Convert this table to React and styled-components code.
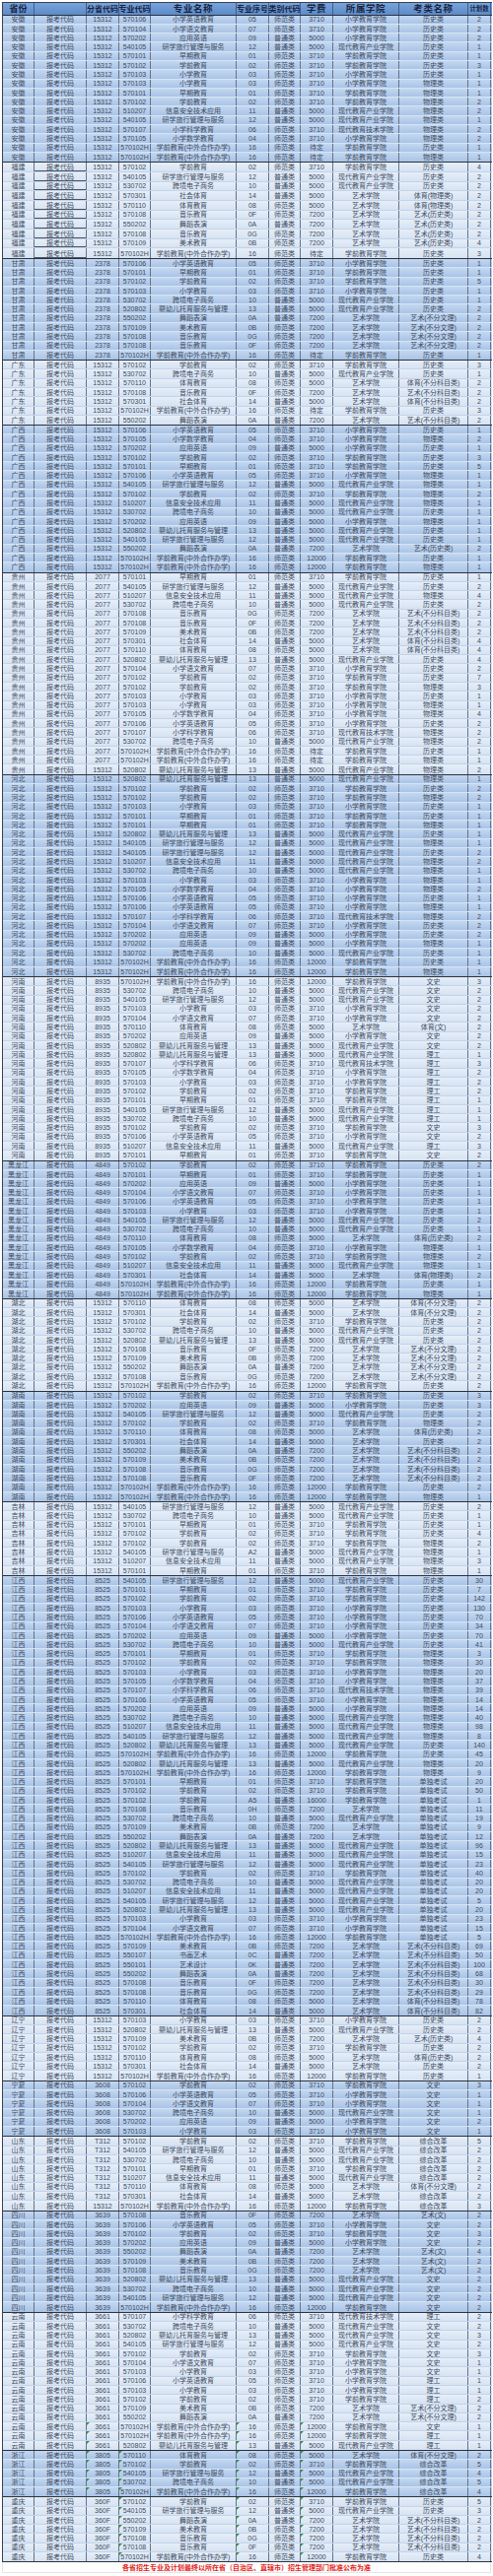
import React from 'react';
import styled, { createGlobalStyle, css } from 'styled-components';

const GlobalStyle = createGlobalStyle`
  html, body { margin: 0; padding: 0; background: #ffffff; }
  body { font-family: "Liberation Sans", "Noto Sans CJK SC", sans-serif; }
`;

const COLS = '32px 53px 33px 32px 87px 33px 32px 33px 67px 70px 23px';
const ROW_H = 9.29;
const TALL_H = 9.7;

const MAJORS = {
  '570106': ['小学英语教育', '05', '师范类', '3710', '小学教育学院'],
  '570104': ['小学语文教育', '07', '师范类', '3710', '小学教育学院'],
  '570202': ['应用英语', '09', '普通类', '5000', '小学教育学院'],
  '540105': ['研学旅行管理与服务', '12', '普通类', '5000', '现代教育产业学院'],
  '570101': ['早期教育', '01', '师范类', '3710', '学前教育学院'],
  '570102': ['学前教育', '02', '师范类', '3710', '学前教育学院'],
  '570103': ['小学教育', '03', '师范类', '3710', '小学教育学院'],
  '510207': ['信息安全技术应用', '11', '普通类', '5000', '现代教育产业学院'],
  '570107': ['小学科学教育', '06', '师范类', '3710', '现代教育技术学院'],
  '570105': ['小学数学教育', '04', '师范类', '3710', '小学教育学院'],
  '570102H': ['学前教育(中外合作办学)', '16', '师范类', '12000', '学前教育学院'],
  '530702': ['跨境电子商务', '10', '普通类', '5000', '现代教育产业学院'],
  '570301': ['社会体育', '14', '普通类', '5000', '艺术学院'],
  '570110': ['体育教育', '08', '师范类', '5000', '艺术学院'],
  '570108': ['音乐教育', '0F', '师范类', '7200', '艺术学院'],
  '550202': ['舞蹈表演', '0A', '普通类', '7200', '艺术学院'],
  '570109': ['美术教育', '0B', '师范类', '7200', '艺术学院'],
  '520802': ['婴幼儿托育服务与管理', '13', '普通类', '5000', '现代教育产业学院'],
  '550107': ['书画艺术', '0C', '普通类', '7200', '艺术学院'],
  '550101': ['艺术设计', '0K', '普通类', '7200', '艺术学院'],
};

const GROUPS = [
  { p: '安徽', c: '15312', h: '待定', rows: `570106 历史类 2|570104 历史类 2|570202 历史类 2|540105 历史类 1|570101 历史类 1|570102 历史类 3|570103 历史类 1|570103 物理类 1|570101 物理类 1|570102 物理类 2|510207 物理类 2|540105 物理类 1|570107 物理类 2|570105 物理类 2|570102H 历史类 1|570102H 物理类 1` },
  { p: '福建', c: '15312', h: '待定', tall: true, ul: true, rows: `570102 历史类 4|540105 历史类 2|530702 历史类 2|570301 体育(物理类) 2|570110 体育(物理类) 2|570108:0F 艺术(历史类) 2|550202 艺术(历史类) 2|570108:0G 艺术(历史类) 2|570109 艺术(历史类) 4|570102H 历史类 3` },
  { p: '甘肃', c: '2378', h: '待定', rows: `570106 历史类 1|570101 历史类 1|570102 历史类 5|570103 历史类 1|530702 历史类 1|520802 历史类 2|550202 艺术(不分文理) 2|570109 艺术(不分文理) 2|570108:0G 艺术(不分文理) 2|570108:0F 艺术(不分文理) 2|570102H 历史类 1` },
  { p: '广东', c: '15312', h: '待定', rows: `570102 历史类 3|530702 历史类 1|570110 体育(不分科目类) 2|570108:0F 艺术(不分科目类) 2|570301 体育(不分科目类) 2|570102H 历史类 3|550202 艺术(不分科目类) 2` },
  { p: '广西', c: '15312', rows: `570106 历史类 1|570105 物理类 2|570202 历史类 1|570102 历史类 3|570101 历史类 5|570106 物理类 1|540105 物理类 1|570102 物理类 2|510207 物理类 1|530702 历史类 1|570202 物理类 1|520802 历史类 1|540105 历史类 1|550202 艺术(历史类) 2|570102H 历史类 1|570102H 物理类 1` },
  { p: '贵州', c: '2077', h: '待定', rows: `570101 历史类 1|540105 历史类 2|510207 物理类 4|530702 历史类 2|570108:0G 艺术(不分科目类) 2|570108:0F 艺术(不分科目类) 2|570109 艺术(不分科目类) 2|570301 体育(不分科目类) 4|570110 体育(不分科目类) 4|520802 历史类 4|570104 历史类 2|570102 历史类 7|570102 物理类 3|570103 历史类 1|570103 物理类 1|570105 物理类 4|570106 历史类 2|570107 物理类 2|530702 物理类 2|570102H 历史类 1|570102H 物理类 1|520802 物理类 2 15312` },
  { p: '河北', c: '15312', rows: `520802 物理类 1|570102 历史类 2|570102 物理类 2|570103 历史类 1|570101 历史类 1|570101 物理类 1|520802 历史类 1|540105 物理类 1|540105 历史类 2|510207 物理类 2|530702 物理类 1|570103 物理类 1|570105 物理类 2|570106 历史类 1|570106 物理类 1|570107 物理类 2|570104 历史类 2|570202 历史类 2|570202 物理类 1|530702 历史类 1|570102H 历史类 1|570102H 物理类 1` },
  { p: '河南', c: '8935', rows: `570102H 文史 3|530702 文史 2|540105 文史 2|570103 文史 2|570104 文史 2|570110 体育(文) 2|570202 文史 2|520802 文史 2|520802 理工 1|570107 理工 3|570105 理工 2|570103 理工 2|570102 理工 2|570101 理工 1|540105 理工 1|530702 理工 1|570102 文史 3|570106 文史 2|510207 理工 3|570101 文史 2` },
  { p: '黑龙江', c: '4849', rows: `570102 历史类 2|570101 历史类 1|570202 历史类 1|570104 历史类 1|570106 历史类 1|570103 历史类 1|540105 历史类 2|530702 历史类 1|570110 体育(历史类) 2|570105 物理类 1|570102 物理类 2|510207 物理类 1|570301 体育(物理类) 2|570102H 历史类 1|570102H 物理类 1` },
  { p: '湖北', c: '15312', rows: `570110 体育(不分文理) 2|570301 体育(不分文理) 2|570102 历史类 2|530702 历史类 2|520802 历史类 2|570108:0F 艺术(不分文理) 2|570109 艺术(不分文理) 2|550202 艺术(不分文理) 2|570108:0G 艺术(不分文理) 2|570102H 历史类 2` },
  { p: '湖南', c: '15312', rows: `570102 历史类 3|570202 历史类 3|540105 历史类 2|570102 物理类 2|570110 体育(历史类) 2|570301 历史类 2|550202 艺术(不分科目类) 2|570109 艺术(不分科目类) 2|570108:0G 艺术(不分科目类) 2|570108:0F 艺术(不分科目类) 2|570102H 历史类 2|570102H 物理类 1` },
  { p: '吉林', c: '15312', rows: `540105 历史类 2|530702 历史类 1|570101 历史类 1|570102 历史类 4|570102 物理类 2|540105:A2 物理类 1|510207 物理类 3|570101 物理类 1` },
  { p: '江西', c: '8525', rows: `540105 历史类 30|570101 历史类 7|570102 历史类 142|570103 历史类 130|570106 历史类 70|570104 历史类 34|570202 历史类 70|530702 历史类 41|570101 物理类 3|570102 物理类 30|570103 物理类 20|570105 物理类 37|570107 物理类 39|570106 物理类 14|570202 物理类 14|530702 物理类 40|510207 物理类 98|540105 物理类 8|520802 历史类 140|570102H 历史类 45|520802 物理类 20|570102H 物理类 9|570101 单独考试 20|570102 单独考试 50|8525 570102 学前教育 A5 普通类 16000 学前教育学院 单独考试 1|570108:0H 单独考试 11|530702 单独考试 19|570109 单独考试 9|550202 单独考试 12|520802 单独考试 96|510207 单独考试 15|540105 单独考试 23|570102 单独考试 40|530702 单独考试 20|510207 单独考试 20|540105 单独考试 5|520802 单独考试 20|570103 单独考试 23|570104 单独考试 15|570102H 单独考试 5|570109 艺术(不分科目类) 69|550107 艺术(不分科目类) 50|550101 艺术(不分科目类) 100|550202 艺术(不分科目类) 68|570108:0F 艺术(不分科目类) 30|570108:0G 艺术(不分科目类) 29|570110 体育(不分科目类) 78|570301 体育(不分科目类) 82` },
  { p: '辽宁', c: '15312', rows: `570103 历史类 2|520802 历史类 2|570109 艺术(历史类) 4|570102 历史类 2|570110 体育(历史类) 2|570301 历史类 2|570102H 历史类 1` },
  { p: '宁夏', c: '3608', rows: `570102 文史 3|570106 文史 1|570104 文史 1|530702 文史 1|570202 文史 2|570103 文史 1` },
  { p: '山东', c: 'T312', rows: `570102 综合改革 5|540105 综合改革 2|530702 综合改革 2|570101 综合改革 2|510207 综合改革 2|570110 体育(不分文理) 2|570301 综合改革 2|570102H 综合改革 3 15312` },
  { p: '四川', c: '3639', rows: `570108:0F 艺术(文) 2|570106 文史 2|570102 文史 3|570202 文史 2|550202 艺术(文) 4|570109 艺术(文) 2|570108:0G 艺术(文) 2|520802 文史 2|530702 文史 2|540105 文史 2|570102H 文史 2` },
  { p: '云南', c: '3661', tri: [2, 5, 7], rows: `570107 理工 2|530702 文史 2|520802 文史 3|540105 文史 2|570102 文史 3|570104 文史 1|570103 文史 1|570106 理工 1|570103 理工 1|570102 理工 2|570109 艺术(不分文理) 2|550202 艺术(不分文理) 2|^570102H 文史 1|^570102H 理工 1|^520802 理工 1` },
  { p: '浙江', c: '3805', tri: [2, 3, 5, 7], triAll: true, rows: `570110 体育(不分文理) 2|570102 综合改革 5|540105 综合改革 4|530702 综合改革 5|570102H 综合改革 4` },
  { p: '重庆', c: '360F', tri: [3, 5, 7], triAll: true, rows: `570102 历史类 5|540105 历史类 3|550202 艺术(不分科目类) 2|570109 艺术(不分科目类) 2|570108:0G 艺术(不分科目类) 2|570108:0F 艺术(不分科目类) 2|570102H 历史类 4` },
];

function buildRow(group, line) {
  let marked = false;
  let src = line;
  if (src.startsWith('^')) { marked = true; src = src.slice(1); }
  const t = src.split(' ');
  let cells;
  if (t.length >= 9) {
    cells = [group.p, '报考代码', ...t];
  } else {
    const [majorKey, exam, plan, codeOverride] = t;
    const [code, seqOverride] = majorKey.split(':');
    const m = MAJORS[code];
    let fee = m[3];
    if (code === '570102H' && group.h) fee = group.h;
    cells = [group.p, '报考代码', codeOverride || group.c, code, m[0], seqOverride || m[1], m[2], fee, m[4], exam, plan];
  }
  const tri = group.tri && (group.triAll || marked) ? group.tri : [];
  return { cells, tri };
}

const HEADERS = [
  { t: '省份', s: 9 },
  { t: '', s: 9 },
  { t: '分省代码', s: 8 },
  { t: '专业代码', s: 8 },
  { t: '专业名称', s: 9.5 },
  { t: '专业序号', s: 8 },
  { t: '类别代码', s: 8 },
  { t: '学费', s: 9.5 },
  { t: '所属学院', s: 9.5 },
  { t: '考类名称', s: 9.5 },
  { t: '计划数', s: 6.4 },
];

const Page = styled.div`
  width: 500px;
  height: 2615px;
  box-sizing: border-box;
  padding: 2px 2px 0 2px;
  display: flex;
  flex-direction: column;
  overflow: hidden;
  background: #ffffff;
`;

const Table = styled.div`
  width: 496px;
  border-left: 1px solid #3b4150;
  border-top: 1px solid #3b4150;
  border-bottom: 1px solid #2c323e;
  display: flex;
  flex-direction: column;
`;

const HeaderRow = styled.div`
  display: grid;
  grid-template-columns: ${COLS};
  height: 11.65px;
  box-sizing: content-box;
  border-bottom: 1px solid #2c3340;
  background: linear-gradient(#78a3d9, #5c8bcb);
`;

const HeaderCell = styled.div`
  box-sizing: border-box;
  border-right: 1px solid #3f5f8f;
  display: flex;
  align-items: center;
  justify-content: center;
  white-space: nowrap;
  overflow: visible;
  font-family: "Noto Sans CJK SC", sans-serif;
  font-weight: 700;
  font-size: ${p => p.$size}px;
  letter-spacing: ${p => (p.$size > 9 ? '0.6px' : '0')};
  color: #18243f;
  line-height: 1;
`;

const Group = styled.div`
  display: flex;
  flex-direction: column;
  border-top: ${p => (p.$first ? '0' : '1px solid #2c323e')};
`;

const Row = styled.div`
  display: grid;
  grid-template-columns: ${COLS};
  height: ${p => p.$h}px;
  box-sizing: border-box;
  border-bottom: 1px solid ${p => (p.$dark ? '#d6e4f5' : '#c3d4ea')};
  background: ${p =>
    p.$dark
      ? 'linear-gradient(#c3d7f0, #a9c4e7)'
      : 'linear-gradient(#e6eef8, #d6e3f3)'};
  &:last-child { border-bottom: 0; }
`;

const Cell = styled.div`
  position: relative;
  box-sizing: border-box;
  border-right: 1px solid #667389;
  display: flex;
  align-items: center;
  justify-content: center;
  white-space: nowrap;
  overflow: visible;
  font-size: 7px;
  line-height: 1;
  color: #414b5d;
  ${p => p.$ul && css`box-shadow: inset 0 -1px 0 #4a5262;`}
  ${p => p.$tri && css`
    &::before {
      content: '';
      position: absolute;
      left: 0;
      top: 0;
      width: 0;
      height: 0;
      border-style: solid;
      border-width: 3px 3px 0 0;
      border-color: #2f9a44 transparent transparent transparent;
    }
  `}
`;

const Footer = styled.div`
  display: flex;
  align-items: flex-start;
  justify-content: center;
  padding-top: 0.5px;
  font-family: "Noto Sans CJK SC", sans-serif;
  font-weight: 700;
  font-size: 7px;
  line-height: 9px;
  color: #e2231a;
  border-left: 1px solid #e4e4e4;
  border-right: 1px solid #e4e4e4;
  border-bottom: 1px solid #e4e4e4;
  width: 496px;
  box-sizing: border-box;
  height: 11px;
  flex: 0 0 11px;
`;

export default function App() {
  return (
    <>
      <GlobalStyle />
      <Page>
        <Table>
          <HeaderRow>
            {HEADERS.map((h, i) => (
              <HeaderCell key={i} $size={h.s}>{h.t}</HeaderCell>
            ))}
          </HeaderRow>
          {GROUPS.map((g, gi) => (
            <Group key={g.p} $first={gi === 0}>
              {g.rows.split('|').map((line, ri) => {
                const { cells, tri } = buildRow(g, line);
                return (
                  <Row key={ri} $dark={gi % 2 === 0} $h={g.tall ? TALL_H : ROW_H}>
                    {cells.map((v, ci) => (
                      <Cell key={ci} $tri={tri.includes(ci)} $ul={g.ul && ci === 1}>
                        {v}
                      </Cell>
                    ))}
                  </Row>
                );
              })}
            </Group>
          ))}
        </Table>
        <Footer>各省招生专业及计划最终以所在省（自治区、直辖市）招生管理部门批准公布为准</Footer>
      </Page>
    </>
  );
}
